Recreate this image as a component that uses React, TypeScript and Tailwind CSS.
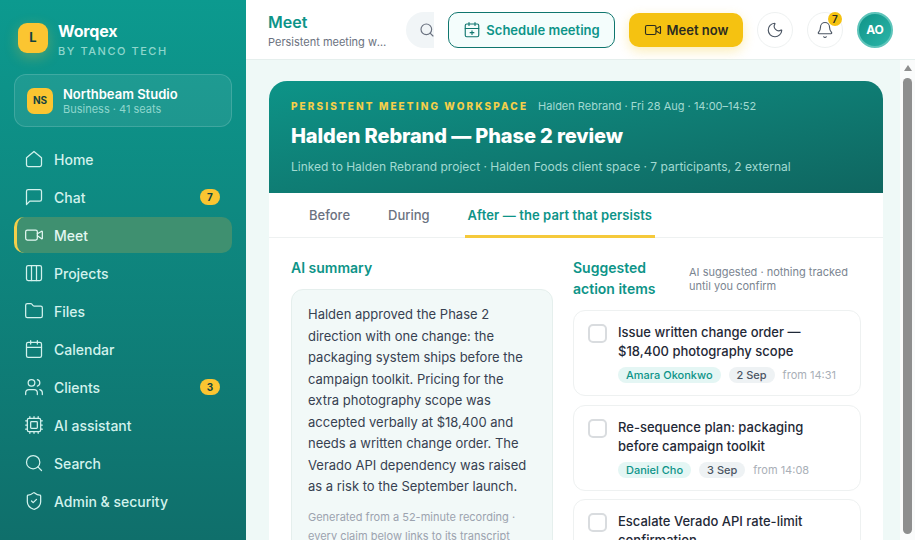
import {
  Bell,
  Calendar,
  Columns3,
  Cpu,
  Folder,
  Moon,
  Search,
  ShieldCheck,
  Users,
  Video,
} from "lucide-react";
import type { SVGProps } from "react";

const heading = "font-['Inter',sans-serif]";

type IconProps = SVGProps<SVGSVGElement> & { size?: number; strokeWidth?: number };

function Outline({ size = 20, strokeWidth = 1.5, children, ...rest }: IconProps) {
  return (
    <svg
      width={size}
      height={size}
      viewBox="0 0 24 24"
      fill="none"
      stroke="currentColor"
      strokeWidth={strokeWidth}
      strokeLinecap="round"
      strokeLinejoin="round"
      {...rest}
    >
      {children}
    </svg>
  );
}

function HomeOutline(props: IconProps) {
  return (
    <Outline {...props}>
      <path d="M3 10.5 12 3l9 7.5V19a2 2 0 0 1-2 2H5a2 2 0 0 1-2-2z" />
    </Outline>
  );
}

function ChatOutline(props: IconProps) {
  return (
    <Outline {...props}>
      <path d="M21 15a2 2 0 0 1-2 2H7l-4 4V5a2 2 0 0 1 2-2h14a2 2 0 0 1 2 2z" />
    </Outline>
  );
}

function CalendarAdd(props: IconProps) {
  return (
    <Outline {...props}>
      <rect x="3" y="4" width="18" height="17" rx="2" />
      <path d="M8 2v4M16 2v4M3 10h18M12 13v5M9.5 15.5h5" />
    </Outline>
  );
}

const navItems = [
  { label: "Home", icon: HomeOutline },
  { label: "Chat", icon: ChatOutline, badge: "7" },
  { label: "Meet", icon: Video, active: true },
  { label: "Projects", icon: Columns3 },
  { label: "Files", icon: Folder },
  { label: "Calendar", icon: Calendar },
  { label: "Clients", icon: Users, badge: "3" },
  { label: "AI assistant", icon: Cpu },
  { label: "Search", icon: Search },
  { label: "Admin & security", icon: ShieldCheck },
];

const actionItems = [
  {
    title: "Issue written change order — $18,400 photography scope",
    owner: "Amara Okonkwo",
    due: "2 Sep",
    from: "from 14:31",
  },
  {
    title: "Re-sequence plan: packaging before campaign toolkit",
    owner: "Daniel Cho",
    due: "3 Sep",
    from: "from 14:08",
  },
  {
    title: "Escalate Verado API rate-limit confirmation",
    owner: "Amara Okonkwo",
    due: "4 Sep",
    from: "from 14:40",
  },
];

function Sidebar() {
  return (
    <aside className="w-[246px] h-full shrink-0 overflow-hidden bg-gradient-to-b from-[#0c9a8f] to-[#0f6f6b] px-[14px] pt-[20px]">
      <div className="flex items-start gap-[10px] px-1">
        <div className="mt-[3px] w-[30px] h-[30px] rounded-[9px] bg-[#fbc531] flex items-center justify-center text-[13px] font-bold text-[#12423f] shadow-[0_4px_14px_rgba(251,197,49,0.3)]">
          L
        </div>
        <div className="mt-px">
          <div className={`${heading} text-[16px] leading-[20px] font-bold tracking-[-0.01em] text-white`}>Worqex</div>
          <div className="mt-[3px] text-[11px] leading-[14px] font-medium tracking-[0.14em] text-[#8fd6cd]">BY TANCO TECH</div>
        </div>
      </div>

      <div className="mt-[16px] h-[53px] rounded-[12px] border border-white/15 bg-white/[0.07] flex items-center gap-[10px] px-[12px]">
        <div className="w-[26px] h-[26px] rounded-[7px] bg-[#fbc531] flex items-center justify-center text-[10px] font-bold text-[#12423f]">
          NS
        </div>
        <div>
          <div className="text-[13px] leading-[16px] font-semibold text-white">Northbeam Studio</div>
          <div className="text-[11px] leading-[14px] text-[#8fd6cd]">Business · 41 seats</div>
        </div>
      </div>

      <nav className="mt-[14px] flex flex-col gap-[2px]">
        {navItems.map((item) => (
          <div
            key={item.label}
            className={`h-[36px] flex items-center gap-[10px] pr-[12px] rounded-[10px] text-[14px] font-medium ${
              item.active ? "bg-[#3f9070] border-l-[3px] border-[#f5cf4a] pl-[7px] text-[#e3f7f2]" : "pl-[10px] text-[#d3f2ed]"
            }`}
          >
            <item.icon size={20} strokeWidth={1.5} className="shrink-0" />
            <span className="flex-1">{item.label}</span>
            {item.badge && (
              <span className="h-[16px] min-w-[20px] px-[5px] rounded-full bg-[#fbc531] text-[#12423f] text-[10px] font-bold flex items-center justify-center">
                {item.badge}
              </span>
            )}
          </div>
        ))}
      </nav>
    </aside>
  );
}

function Header() {
  return (
    <header className="h-[60px] shrink-0 bg-white border-b border-[#e5efed] flex items-center pt-px pl-[22px] pr-[22px]">
      <div className="w-[121px] shrink-0 mt-px">
        <div className={`${heading} text-[16px] leading-[22px] font-semibold text-[#0d9488]`}>Meet</div>
        <div className="mt-px text-[11px] leading-[16px] text-[#6b7280] truncate">Persistent meeting workspace</div>
      </div>
      <div className="ml-[17px] w-[28px] h-[36px] rounded-l-full bg-[#f1f5f7] flex items-center pl-[13px] overflow-hidden shrink-0">
        <Search size={16} strokeWidth={1.75} className="shrink-0 text-[#6b7280]" />
      </div>
      <button className="ml-[14px] w-[167px] h-[36px] shrink-0 rounded-[10px] border border-[#0f766e] bg-[#f4fdfc] flex items-center justify-center gap-[5px] text-[13px] font-semibold text-[#0d9488]">
        <CalendarAdd size={18} strokeWidth={1.5} className="text-[#0f766e]" />
        <span className="mt-[2px]">Schedule meeting</span>
      </button>
      <button className="ml-[14px] w-[114px] h-[34px] shrink-0 rounded-[10px] bg-[#f5c211] flex items-center justify-center gap-[5px] text-[13px] font-semibold text-[#2b2b20] shadow-[0_4px_12px_rgba(245,194,17,0.3)]">
        <Video size={18} strokeWidth={1.5} />
        <span className="mt-[2px]">Meet now</span>
      </button>
      <button className="ml-[14px] w-[36px] h-[36px] shrink-0 rounded-full border border-[#eef1f1] bg-white flex items-center justify-center text-[#4b5563]">
        <Moon size={18} strokeWidth={1.5} />
      </button>
      <button className="relative ml-[14px] w-[36px] h-[36px] shrink-0 rounded-full border border-[#eef1f1] bg-white flex items-center justify-center text-[#4b5563]">
        <Bell size={18} strokeWidth={1.5} />
        <span className="absolute -top-[1px] right-0 w-[14px] h-[14px] rounded-full bg-[#f5c211] text-[10px] font-semibold text-[#2b2b20] flex items-center justify-center">
          7
        </span>
      </button>
      <div className="ml-[14px] w-[36px] h-[36px] shrink-0 rounded-full border-2 border-[#5ec4ba] bg-gradient-to-br from-[#0d9488] to-[#2bb5a8] flex items-center justify-center text-[12px] font-bold text-white">
        AO
      </div>
    </header>
  );
}

function ActionCard({ title, owner, due, from }: { title: string; owner: string; due: string; from: string }) {
  return (
    <div className="rounded-[12px] border border-[#eef1f1] bg-white flex gap-[11px] pl-[14px] pr-[16px] pt-[12px] pb-[12px]">
      <div className="w-[19px] h-[19px] mt-[1px] shrink-0 rounded-[5px] border-2 border-[#d9dcdf] bg-white" />
      <div className="min-w-0">
        <div className="text-[13px] leading-[19px] font-medium text-[#1f2937]">{title}</div>
        <div className="mt-[6px] flex items-center gap-[8px] text-[11px] leading-[16px] whitespace-nowrap">
          <span className="px-[8px] rounded-full bg-[#e4f6f4] font-medium text-[#0d9488]">{owner}</span>
          <span className="px-[8px] rounded-full bg-[#eef2f4] font-medium text-[#4b5563]">{due}</span>
          <span className="text-[#a9afb7]">{from}</span>
        </div>
      </div>
    </div>
  );
}

function Tab({ label, active }: { label: string; active?: boolean }) {
  return (
    <div
      className={`relative flex items-center px-[3px] pt-px ${
        active ? "text-[#0d9488] font-semibold tracking-[0.1px]" : "text-[#6b7280] font-medium"
      }`}
    >
      {label}
      {active && <span className="absolute left-0 right-0 -bottom-px h-[3px] bg-[#f5c93b]" />}
    </div>
  );
}

export default function App() {
  return (
    <div className="w-[915px] h-[540px] flex overflow-hidden font-['Inter',sans-serif] bg-white">
      <Sidebar />
      <div className="flex-1 min-w-0 h-full flex flex-col">
        <Header />
        <div className="flex-1 min-h-0 flex">
          <main className="flex-1 min-w-0 overflow-hidden bg-[#eff9f7] pl-[23px] pr-[17px] pt-[21px]">
            <div className="rounded-[18px] bg-white overflow-hidden">
              <div className="h-[112px] bg-gradient-to-br from-[#0d9488] to-[#0f6660] px-[22px] pt-[18px]">
                <div className="flex items-center gap-[10px]">
                  <span className="text-[10px] leading-[14px] font-extrabold tracking-[0.21em] text-[#f5cf4a]">PERSISTENT MEETING WORKSPACE</span>
                  <span className="text-[11px] leading-[14px] text-[#a2dad2]">Halden Rebrand · Fri 28 Aug · 14:00–14:52</span>
                </div>
                <h1 className={`${heading} mt-[8px] text-[20px] leading-[30px] font-extrabold tracking-[-0.1px] text-white`}>Halden Rebrand — Phase 2 review</h1>
                <p className="mt-[8px] text-[12px] leading-[16px] text-[#a2dad2]">
                  Linked to Halden Rebrand project · Halden Foods client space · 7 participants, 2 external
                </p>
              </div>
              <div className="h-[45px] border-b border-[#eef1f1] flex pl-[37px] gap-[32px] text-[13px]">
                <Tab label="Before" />
                <Tab label="During" />
                <Tab label="After — the part that persists" active />
              </div>
              <div className="grid grid-cols-[262px_288px] gap-[20px] px-[22px] pt-[19px] pb-[24px]">
                <section>
                  <h2 className={`${heading} text-[14px] leading-[21px] font-semibold text-[#0d9488]`}>AI summary</h2>
                  <div className="mt-[11px] rounded-[12px] border border-[#e5efed] bg-[#f2f9f8] px-[16px] pt-[14px] pb-[16px]">
                    <p className="text-[13px] leading-[21.5px] text-[#374151]">
                      Halden approved the Phase 2 direction with one change: the packaging system ships before the campaign toolkit. Pricing for the extra photography scope was accepted verbally at $18,400 and needs a written change order. The Verado API dependency was raised as a risk to the September launch.
                    </p>
                    <p className="mt-[10px] text-[11px] leading-[19px] text-[#9ca3af]">
                      Generated from a 52-minute recording · every claim below links to its transcript moment.
                    </p>
                  </div>
                </section>
                <section>
                  <div className="flex items-center gap-[16px]">
                    <h2 className={`${heading} w-[100px] shrink-0 text-[14px] leading-[21px] font-semibold text-[#0d9488]`}>Suggested action items</h2>
                    <p className="mt-[2px] text-[11px] leading-[14px] text-[#7b8591]">AI suggested · nothing tracked until you confirm</p>
                  </div>
                  <div className="mt-[11px] flex flex-col gap-[8.5px]">
                    {actionItems.map((item) => (
                      <ActionCard key={item.title} {...item} />
                    ))}
                  </div>
                </section>
              </div>
            </div>
          </main>
          {/* page scrollbar as it shows in the shot */}
          <div className="w-[15px] shrink-0 bg-[#fafbfb] flex flex-col items-center pt-[5px]">
            <div className="w-0 h-0 border-x-[4.5px] border-x-transparent border-b-[6px] border-b-[#8e8e8e]" />
            <div className="mt-[7px] w-[9px] h-[456px] rounded-full bg-[#8e8e8e]" />
          </div>
        </div>
      </div>
    </div>
  );
}
